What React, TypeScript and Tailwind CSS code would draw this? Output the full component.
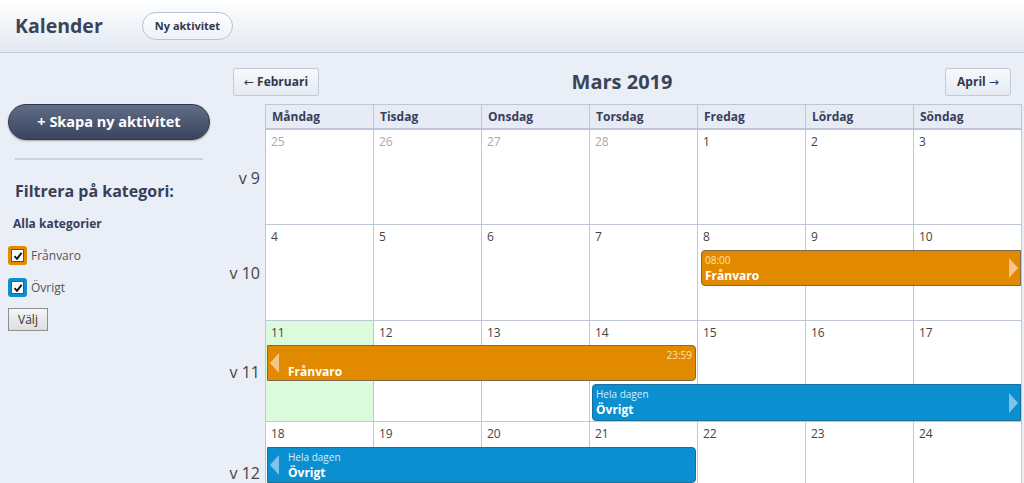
import React from "react";

type Ev = {
  color: "orange" | "blue";
  top?: string;
  topRight?: string;
  title: string;
  arrow?: "left" | "right";
  cls: string;
};

type Week = {
  label: string;
  rows: string;
  days: { n: number; muted?: boolean; today?: boolean }[];
  events: Ev[];
};

const dayNames = ["Måndag", "Tisdag", "Onsdag", "Torsdag", "Fredag", "Lördag", "Söndag"];

const weeks: Week[] = [
  {
    label: "v 9",
    rows: "grid-rows-[25px_70px]",
    days: [
      { n: 25, muted: true },
      { n: 26, muted: true },
      { n: 27, muted: true },
      { n: 28, muted: true },
      { n: 1 },
      { n: 2 },
      { n: 3 },
    ],
    events: [],
  },
  {
    label: "v 10",
    rows: "grid-rows-[25px_36px_35px]",
    days: [{ n: 4 }, { n: 5 }, { n: 6 }, { n: 7 }, { n: 8 }, { n: 9 }, { n: 10 }],
    events: [
      {
        color: "orange",
        top: "08:00",
        title: "Frånvaro",
        arrow: "right",
        cls: "col-start-5 col-span-3 row-start-2 ml-[3px] mr-px rounded-l-[4px]",
      },
    ],
  },
  {
    label: "v 11",
    rows: "grid-rows-[24px_36px_41px]",
    days: [{ n: 11, today: true }, { n: 12 }, { n: 13 }, { n: 14 }, { n: 15 }, { n: 16 }, { n: 17 }],
    events: [
      {
        color: "orange",
        topRight: "23:59",
        title: "Frånvaro",
        arrow: "left",
        cls: "col-start-1 col-span-4 row-start-2 ml-px mr-[2px] rounded-r-[4px]",
      },
      {
        color: "blue",
        top: "Hela dagen",
        title: "Övrigt",
        arrow: "right",
        cls: "col-start-4 col-span-4 row-start-3 mt-[3px] mb-px ml-[2px] mr-px rounded-l-[4px]",
      },
    ],
  },
  {
    label: "v 12",
    rows: "grid-rows-[25px_36px_40px]",
    days: [{ n: 18 }, { n: 19 }, { n: 20 }, { n: 21 }, { n: 22 }, { n: 23 }, { n: 24 }],
    events: [
      {
        color: "blue",
        top: "Hela dagen",
        title: "Övrigt",
        arrow: "left",
        cls: "col-start-1 col-span-4 row-start-2 ml-px mr-[2px] rounded-r-[4px]",
      },
    ],
  },
];

function Arrow({ dir, color }: { dir: "left" | "right"; color: string }) {
  return (
    <svg width="9" height="20" viewBox="0 0 9 20" className="shrink-0">
      {dir === "left" ? (
        <polygon points="9,0 9,20 0,10" fill={color} />
      ) : (
        <polygon points="0,0 0,20 9,10" fill={color} />
      )}
    </svg>
  );
}

function EventBar({ ev }: { ev: Ev }) {
  const orange = ev.color === "orange";
  const bg = orange ? "bg-[#e18a00] border-[#7d6a50]" : "bg-[#0a8fd0] border-[#1a6f9c]";
  const arrowColor = orange ? "#f5c58a" : "#7fc3ea";
  const small = orange ? "text-[#ffe2b0]" : "text-[#d8eefa]";
  return (
    <div className={`${ev.cls} ${bg} border flex items-center text-white relative z-10`}>
      {ev.arrow === "left" && (
        <div className="pl-[2px] pr-[9px]">
          <Arrow dir="left" color={arrowColor} />
        </div>
      )}
      <div className={`flex-1 flex flex-col ${ev.arrow === "left" ? "" : "pl-[3px]"} leading-none`}>
        {ev.topRight ? (
          <div className={`text-[10px] ${small} text-right pr-[3px] pt-[2px] pb-[6px]`}>{ev.topRight}</div>
        ) : (
          <div className={`text-[10px] ${small} pb-[5px]`}>{ev.top}</div>
        )}
        <div className="text-[12px] font-bold">{ev.title}</div>
      </div>
      {ev.arrow === "right" && (
        <div className="pr-[2px]">
          <Arrow dir="right" color={arrowColor} />
        </div>
      )}
    </div>
  );
}

function CheckBox({ color }: { color: string }) {
  return (
    <span className={`w-[19px] h-[19px] rounded-[3px] flex items-center justify-center ${color}`}>
      <span className="w-[13px] h-[13px] bg-white border border-[#555] flex items-center justify-center">
        <svg width="10" height="10" viewBox="0 0 10 10">
          <path d="M1.5 5.2 L4 7.8 L8.6 1.8" stroke="#111" strokeWidth="1.9" fill="none" />
        </svg>
      </span>
    </span>
  );
}

export default function App() {
  return (
    <div
      className="w-[1024px] min-h-[483px] bg-[#eaeef6] text-[#3a4458]"
      style={{ fontFamily: "'Open Sans', 'Noto Sans', sans-serif" }}
    >
      {/* Top bar */}
      <div className="h-[53px] flex items-center border-b border-[#c3cbd8] bg-gradient-to-b from-white to-[#e2e8f2]">
        <div className="pl-[15px] w-[142px] text-[19.5px] font-bold text-[#3a4458]">Kalender</div>
        <button className="h-[28px] w-[91px] rounded-full border border-[#b8c2d2] bg-gradient-to-b from-white to-[#eef1f7] text-[11px] font-bold text-[#2f3a4d]">
          Ny aktivitet
        </button>
      </div>

      <div className="flex">
        {/* Sidebar */}
        <div className="w-[220px] shrink-0 pt-[51px]">
          <button className="ml-2 w-[202px] h-[36px] rounded-full border border-[#2e3648] bg-gradient-to-b from-[#616d86] to-[#3a4460] text-white text-[14.5px] font-bold shadow-[0_1px_2px_rgba(0,0,0,0.3)]">
            + Skapa ny aktivitet
          </button>
          <div className="mx-[15px] mt-[18px] w-[188px] h-[2px] bg-[#cbd2de]" />
          <div className="pl-[15px] mt-[19px] text-[16px] font-bold text-[#36405a]">Filtrera på kategori:</div>
          <div className="pl-[13px] mt-[12px] text-[12px] font-bold text-[#36405a]">Alla kategorier</div>
          <div className="pl-[8px] mt-[13px] flex items-center gap-[4px] text-[12px] text-[#555]">
            <CheckBox color="bg-[#e18a00]" />
            <span>Frånvaro</span>
          </div>
          <div className="pl-[8px] mt-[13px] flex items-center gap-[4px] text-[12px] text-[#555]">
            <CheckBox color="bg-[#0a8fd0]" />
            <span>Övrigt</span>
          </div>
          <button className="ml-[8px] mt-[11px] w-[40px] h-[23px] border border-[#8f8f8f] bg-gradient-to-b from-[#f6f6f6] to-[#dedede] text-[12px] text-[#333]">
            Välj
          </button>
        </div>

        {/* Main */}
        <div className="flex-1 pt-[14px]">
          <div className="grid grid-cols-[1fr_auto_1fr] items-center px-[13px] h-[28px]">
            <div>
              <button className="h-[28px] w-[86px] rounded-[3px] border border-[#c3cad6] bg-gradient-to-b from-[#f7f9fc] to-[#e6eaf2] text-[12px] font-bold text-[#2f3a4d]">
                <span className="font-normal font-['DejaVu_Sans',sans-serif]">←</span> Februari
              </button>
            </div>
            <div className="text-[20px] font-bold text-[#3a4458]">Mars 2019</div>
            <div className="flex justify-end">
              <button className="h-[28px] w-[66px] rounded-[3px] border border-[#c3cad6] bg-gradient-to-b from-[#f7f9fc] to-[#e6eaf2] text-[12px] font-bold text-[#2f3a4d]">
                April <span className="font-normal font-['DejaVu_Sans',sans-serif]">→</span>
              </button>
            </div>
          </div>

          <div className="mt-[9px]">
            {/* Day names */}
            <div className="flex">
              <div className="w-[45px] shrink-0" />
              <div className="grid grid-cols-[repeat(7,108px)] border-l border-t border-[#bdc7d6] bg-[#e6ebf5]">
                {dayNames.map((d) => (
                  <div
                    key={d}
                    className="h-[25px] border-r border-b-2 border-[#bdc7d6] pl-[6px] flex items-center text-[12px] font-bold text-[#36405a]"
                  >
                    {d}
                  </div>
                ))}
              </div>
            </div>

            {weeks.map((w) => (
              <div key={w.label} className="flex">
                <div className="w-[45px] shrink-0 flex items-center justify-end pr-[5px] text-[16px] text-[#444]">
                  {w.label}
                </div>
                <div className={`grid grid-cols-[repeat(7,108px)] ${w.rows} border-l border-[#bdc7d6]`}>
                  {w.days.map((d, i) => (
                    <div
                      key={i}
                      className={`row-span-full border-r border-b border-[#bdc7d6] ${
                        d.today ? "bg-[#dcfadc]" : "bg-white"
                      }`}
                      style={{ gridColumnStart: i + 1 }}
                    >
                      <div
                        className={`pl-[5px] pt-[5px] text-[12px] leading-[14px] ${
                          d.muted ? "text-[#aaa]" : "text-[#444]"
                        }`}
                      >
                        {d.n}
                      </div>
                    </div>
                  ))}
                  {w.events.map((ev, i) => (
                    <EventBar key={i} ev={ev} />
                  ))}
                </div>
              </div>
            ))}
          </div>
        </div>
      </div>
    </div>
  );
}
